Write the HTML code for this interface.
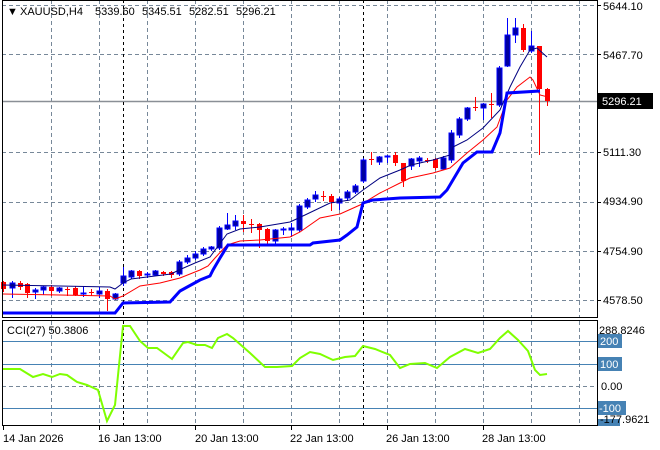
<!DOCTYPE html>
<html><head><meta charset="utf-8"><style>
html,body{margin:0;padding:0;background:#fff;width:660px;height:450px;overflow:hidden}
svg{display:block;font-family:"Liberation Sans",sans-serif;font-size:11px}
</style></head><body>
<svg id="s" width="660" height="450" xmlns="http://www.w3.org/2000/svg">
<rect width="660" height="450" fill="#fff"/>
<g id="grid" stroke="#778899" stroke-dasharray="4,3" stroke-width="1"></g>
<line x1="2" y1="101.5" x2="597" y2="101.5" stroke="#8a8f96" stroke-width="1.5"/>
<line x1="123.5" y1="0" x2="123.5" y2="317" stroke="#000" stroke-dasharray="3,3"/>
<line x1="363.5" y1="0" x2="363.5" y2="317" stroke="#000" stroke-dasharray="3,3"/>
<line x1="123.5" y1="321" x2="123.5" y2="425" stroke="#000" stroke-dasharray="3,3"/>
<line x1="363.5" y1="321" x2="363.5" y2="425" stroke="#000" stroke-dasharray="3,3"/>
<g id="cciLines" stroke="#4682b4" stroke-width="1">
<line x1="2" y1="341.5" x2="597" y2="341.5"/>
<line x1="2" y1="364.5" x2="597" y2="364.5"/>
<line x1="2" y1="408.5" x2="597" y2="408.5"/>
</g>
<line x1="2" y1="386.5" x2="597" y2="386.5" stroke="#778899" stroke-dasharray="4,3"/>
<g id="candles"></g>
<polyline id="navy" fill="none" stroke="#000080" stroke-width="1"/>
<polyline id="red" fill="none" stroke="#ff0000" stroke-width="1"/>
<polyline id="blue" fill="none" stroke="#0000ff" stroke-width="3"/>
<polyline id="cci" fill="none" stroke="#7fff00" stroke-width="2"/>
<rect x="2.5" y="0.5" width="595" height="317" fill="none" stroke="#000"/>
<rect x="2.5" y="320.5" width="595" height="105" fill="none" stroke="#000"/>
<g fill="#000">
<text x="7" y="15">▼</text>
<text x="20" y="15">XAUUSD,H4</text>
<text x="95" y="15">5339.60</text>
<text x="142" y="15">5345.51</text>
<text x="189" y="15">5282.51</text>
<text x="236" y="15">5296.21</text>
</g>
<text x="7" y="334" fill="#000">CCI(27) 50.3806</text>
<g fill="#000">
<text x="603" y="10">5644.10</text>
<text x="603" y="59">5467.70</text>
<text x="603" y="156">5111.30</text>
<text x="603" y="205">4934.90</text>
<text x="603" y="255">4754.90</text>
<text x="603" y="304">4578.50</text>
</g>
<rect x="598" y="93" width="55" height="16" fill="#000"/>
<text x="602" y="105" fill="#fff">5296.21</text>
<rect x="598" y="334" width="24" height="14" fill="#4682b4"/>
<rect x="598" y="357" width="24" height="14" fill="#4682b4"/>
<rect x="598" y="401" width="28" height="14" fill="#4682b4"/>
<rect x="598" y="419" width="22" height="7" fill="#4682b4"/>
<text x="599" y="334" fill="#000">288.8246</text>
<text x="600" y="345" fill="#fff">200</text>
<text x="600" y="368" fill="#fff">100</text>
<text x="601" y="390" fill="#000">0.00</text>
<text x="599" y="412" fill="#fff">-100</text>
<text x="600" y="423" fill="#000">-177.9621</text>
<g fill="#000">
<text x="3" y="442">14 Jan 2026</text>
<text x="98" y="442">16 Jan 13:00</text>
<text x="195" y="442">20 Jan 13:00</text>
<text x="290" y="442">22 Jan 13:00</text>
<text x="386" y="442">26 Jan 13:00</text>
<text x="482" y="442">28 Jan 13:00</text>
</g>
<g id="ticks" stroke="#000"></g>
</svg>
<script>
var NS="http://www.w3.org/2000/svg";
function el(p,t,a){var e=document.createElementNS(NS,t);for(var k in a)e.setAttribute(k,a[k]);document.getElementById(p).appendChild(e);return e;}
var gx=[51,99,147,195,243,291,339,387,435,483,531,579];
gx.forEach(function(x){el("grid","line",{x1:x+.5,y1:0,x2:x+.5,y2:317});el("grid","line",{x1:x+.5,y1:321,x2:x+.5,y2:425});});
[5,54,152,202,251,300].forEach(function(y){el("grid","line",{x1:2,y1:y+.5,x2:597,y2:y+.5});});
[5,54,101,152,202,251,300].forEach(function(y){el("ticks","line",{x1:597,y1:y+.5,x2:601,y2:y+.5});});
[3,99,195,291,387,483].forEach(function(x){el("ticks","line",{x1:x+.5,y1:426,x2:x+.5,y2:430});});
var C=[[3,0,282,289,281,292],[12,1,283,288,281,298],[20,0,283,287,281,290],[27,0,284,293,283,298],[35,1,290,292,288,299],[43,1,287,290,286,295],[51,0,287,291,285,296],[59,1,288,291,287,293],[67,0,289,290,287,296],[75,0,288,295,286,296],[83,1,293,294,287,297],[91,0,292,293,289,296],[99,1,291,294,287,298],[107,0,291,299,289,311],[115,1,294,299,293,300],[123,1,276,283,267,286],[131,1,271,277,270,279],[139,0,271,276,270,279],[147,1,274,275,272,278],[155,1,271,275,270,276],[163,0,272,274,271,276],[171,0,272,275,271,278],[179,1,262,274,260,276],[187,1,258,262,255,264],[195,1,254,258,251,260],[203,1,249,254,247,256],[211,1,247,249,246,251],[219,1,228,248,226,250],[227,1,225,229,213,230],[235,1,221,226,215,230],[243,0,221,224,215,232],[251,0,224,225,219,233],[259,0,224,230,223,248],[267,0,229,241,228,244],[275,1,230,241,229,244],[283,1,229,230,227,235],[291,1,228,230,223,237],[299,1,206,230,204,232],[307,1,200,207,198,209],[315,1,195,199,191,202],[323,0,196,197,191,201],[331,0,196,202,194,211],[339,1,199,203,197,210],[347,1,192,198,190,201],[355,1,186,192,184,194],[363,1,160,181,158,183],[371,0,159,160,152,165],[379,1,157,162,156,165],[387,1,156,157,155,163],[395,0,155,163,152,166],[403,0,163,181,163,187],[411,1,159,166,158,170],[419,1,158,161,156,167],[427,0,160,161,158,163],[435,0,159,168,158,170],[443,1,158,169,156,170],[451,1,133,160,130,163],[459,1,119,135,117,138],[467,1,108,119,107,121],[475,0,107,108,97,111],[483,1,104,108,103,120],[491,0,104,105,93,118],[499,1,68,105,66,107],[507,1,35,66,18,67],[515,1,28,35,18,43],[523,0,28,50,24,52],[531,1,46,51,31,53],[539,0,46,89,46,155],[547,0,89,101,88,106]];
C.forEach(function(c){var col=c[1]?"#0000a0":"#ff0000",wc=c[1]?"#0000ff":"#ff0000";
el("candles","line",{x1:c[0]+.5,y1:c[4],x2:c[0]+.5,y2:c[5],stroke:wc,"stroke-width":1});
var h=Math.max(1,c[3]-c[2]);
el("candles","rect",{x:c[0]-2,y:c[2],width:5,height:h,fill:col,stroke:c[1]?"#0000ff":"#ff0000","stroke-width":c[1]?1:0});});
function P(id,a){document.getElementById(id).setAttribute("points",a.map(function(p){return p.join(",")}).join(" "));}
P("navy",[[3,285],[60,286],[110,287],[115,289],[123,283],[131,279],[147,277],[171,274],[179,270],[195,263],[210,257],[227,234],[240,229],[260,227],[290,222],[305,215],[330,203],[350,200],[363,190],[380,178],[400,170],[411,165],[433,160],[450,155],[453,147],[467,140],[483,128],[500,110],[510,87],[520,67],[530,50],[537,48],[547,57]]);
P("red",[[3,294],[60,295],[110,296],[115,299],[123,296],[140,286],[160,283],[180,278],[200,270],[208,266],[215,258],[227,245],[240,241],[260,240],[290,237],[300,232],[320,218],[340,214],[360,205],[380,193],[400,183],[410,178],[433,173],[450,168],[467,153],[483,140],[497,127],[507,100],[517,87],[530,77],[533,80],[540,95],[548,97]]);
P("blue",[[3,313],[115,313],[123,303],[170,302],[180,291],[200,280],[210,276],[213,270],[220,258],[228,245],[310,245],[313,243],[340,240],[347,235],[357,227],[363,203],[373,200],[400,198],[440,197],[447,190],[463,163],[477,152],[492,152],[500,133],[507,93],[540,91]]);
P("cci",[[3,369],[20,369],[33,377],[43,374],[52,377],[60,374],[67,375],[77,382],[87,385],[98,390],[107,421],[115,405],[123,326],[130,326],[140,341],[148,348],[157,348],[172,359],[183,343],[188,342],[197,345],[205,345],[212,348],[218,338],[227,334],[233,338],[250,353],[265,367],[277,367],[292,366],[300,358],[310,352],[320,354],[333,360],[345,357],[355,356],[363,346],[375,349],[390,355],[400,368],[410,364],[425,363],[437,368],[450,357],[465,349],[478,353],[490,349],[500,338],[508,331],[518,340],[528,351],[535,370],[540,375],[547,374]]);
</script>
</body></html>
